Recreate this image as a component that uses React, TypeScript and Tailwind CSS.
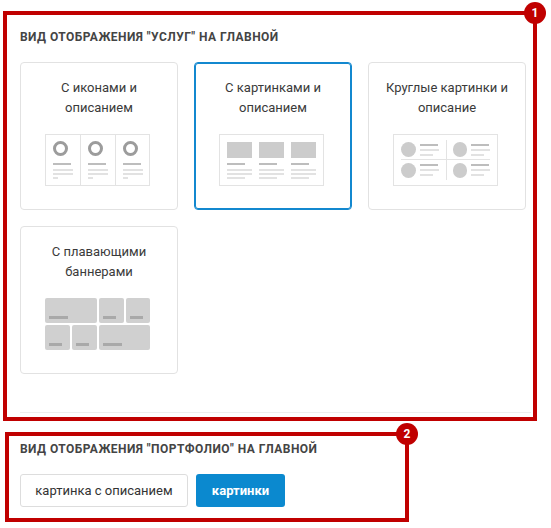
import React from "react";

type Variant = "icons" | "pictures" | "round" | "banners";

const options: { id: Variant; title: string[] }[] = [
  { id: "icons", title: ["С иконами и", "описанием"] },
  { id: "pictures", title: ["С картинками и", "описанием"] },
  { id: "round", title: ["Круглые картинки и", "описание"] },
  { id: "banners", title: ["С плавающими", "баннерами"] },
];

const IconsPreview = () => (
  <div className="grid h-[52px] w-[105px] grid-cols-3 border border-[#e3e3e3] bg-white">
    {[0, 1, 2].map((i) => (
      <div key={i} className={`flex flex-col pl-[7px] pt-[6px] ${i > 0 ? "border-l border-[#e3e3e3]" : ""}`}>
        <div className="h-[15px] w-[15px] rounded-full border-[3px] border-[#9c9c9c]" />
        <div className="mt-[7px] h-[2px] w-[18px] bg-[#bdbdbd]" />
        <div className="mt-[4px] h-[2px] w-[20px] bg-[#e2e2e2]" />
        <div className="mt-[2px] h-[2px] w-[20px] bg-[#e2e2e2]" />
        <div className="mt-[2px] h-[2px] w-[5px] bg-[#e2e2e2]" />
      </div>
    ))}
  </div>
);

const PicturesPreview = () => (
  <div className="grid h-[52px] w-[105px] grid-cols-[25px_25px_25px] gap-x-[7px] border border-[#e3e3e3] bg-white px-[7px] pt-[7px]">
    {[0, 1, 2].map((i) => (
      <div key={i} className="flex flex-col">
        <div className="h-[16px] w-[25px] bg-[#cccccc]" />
        <div className="mt-[5px] h-[2px] w-[18px] bg-[#bdbdbd]" />
        <div className="mt-[4px] h-[2px] w-[25px] bg-[#e2e2e2]" />
        <div className="mt-[2px] h-[2px] w-[25px] bg-[#e2e2e2]" />
        <div className="mt-[2px] h-[2px] w-[18px] bg-[#e2e2e2]" />
      </div>
    ))}
  </div>
);

const RoundCell = ({ right, bottom }: { right?: boolean; bottom?: boolean }) => (
  <div
    className={`flex items-center gap-[4px] ${right ? "border-l border-[#e3e3e3] pl-[6px]" : ""} ${
      bottom ? "" : "border-b border-[#e3e3e3]"
    }`}
  >
    <div className="h-[15px] w-[15px] rounded-full bg-[#cccccc]" />
    <div className="flex flex-col gap-[3px]">
      <div className="h-[2px] w-[18px] bg-[#bdbdbd]" />
      <div className="h-[2px] w-[19px] bg-[#e2e2e2]" />
      <div className="h-[2px] w-[13px] bg-[#e2e2e2]" />
    </div>
  </div>
);

const RoundPreview = () => (
  <div className="h-[52px] w-[105px] border border-[#e3e3e3] bg-white px-[7px] py-[5px]">
    <div className="grid h-full grid-cols-2 grid-rows-2">
      <RoundCell />
      <RoundCell right />
      <RoundCell bottom />
      <RoundCell right bottom />
    </div>
  </div>
);

const Tile = ({ bar, className = "" }: { bar: number; className?: string }) => (
  <div className={`flex items-end rounded-[2px] bg-[#d0d0d0] p-[4px] ${className}`}>
    <div className="h-[3px] bg-[#a9a9a9]" style={{ width: bar }} />
  </div>
);

const BannersPreview = () => (
  <div className="grid h-[52px] w-[105px] grid-cols-[25px_25px_25px_24px] grid-rows-[25px_25px] gap-[2px]">
    <Tile bar={19} className="col-span-2" />
    <Tile bar={13} />
    <Tile bar={13} />
    <Tile bar={13} />
    <Tile bar={13} />
    <Tile bar={19} className="col-span-2" />
  </div>
);

const previews: Record<Variant, () => React.ReactElement> = {
  icons: IconsPreview,
  pictures: PicturesPreview,
  round: RoundPreview,
  banners: BannersPreview,
};

const Badge = ({ n }: { n: number }) => (
  <div className="absolute -right-[13px] -top-[13px] flex h-[22px] w-[22px] items-center justify-center rounded-full bg-[#c00000] text-[12px] font-bold leading-none text-white">
    {n}
  </div>
);

export default function App() {
  const selected: Variant = "pictures";

  return (
    <div className="relative h-[528px] w-[551px] overflow-hidden bg-white font-['Roboto',sans-serif] text-[#333]">
      <div className="px-[20px]">
        <div className="border-b border-[#eeeeee] pb-[38px] pt-[30px]">
          <h3 className="mb-[17px] text-[12px] font-bold uppercase leading-[15px] tracking-[0.45px] text-[#444]">
            Вид отображения "услуг" на главной
          </h3>
          <div className="grid grid-cols-[158px_158px_158px] gap-[16px]">
            {options.map((o) => {
              const Preview = previews[o.id];
              const active = o.id === selected;
              return (
                <div
                  key={o.id}
                  className={`flex h-[148px] flex-col items-center rounded-[4px] border bg-white pt-[15px] ${
                    active ? "border-[#1388cf] shadow-[inset_0_0_0_1px_#1388cf]" : "border-[#e2e2e2]"
                  }`}
                >
                  <div className="text-center text-[13px] leading-[20px] text-[#3a3a3a]">
                    {o.title.map((t) => (
                      <div key={t}>{t}</div>
                    ))}
                  </div>
                  <div className="mr-[3px] mt-[16px]">
                    <Preview />
                  </div>
                </div>
              );
            })}
          </div>
        </div>

        <div className="pt-[29px]">
          <h3 className="mb-[17px] text-[12px] font-bold uppercase leading-[15px] tracking-[0.45px] text-[#444]">
            Вид отображения "портфолио" на главной
          </h3>
          <div className="flex gap-[8px]">
            <button className="h-[33px] w-[168px] rounded-[3px] border border-[#dddddd] bg-white text-center text-[13px] text-[#333]">
              картинка с описанием
            </button>
            <button className="h-[33px] w-[89px] rounded-[3px] bg-[#0b89cf] text-center text-[13px] font-bold text-white">
              картинки
            </button>
          </div>
        </div>
      </div>

      {/* numbered callouts */}
      <div className="absolute left-[3px] top-[11px] h-[410px] w-[534px] border-[4px] border-[#c00000]">
        <Badge n={1} />
      </div>
      <div className="absolute left-[5px] top-[432px] h-[90px] w-[404px] border-[4px] border-[#c00000]">
        <Badge n={2} />
      </div>
    </div>
  );
}
